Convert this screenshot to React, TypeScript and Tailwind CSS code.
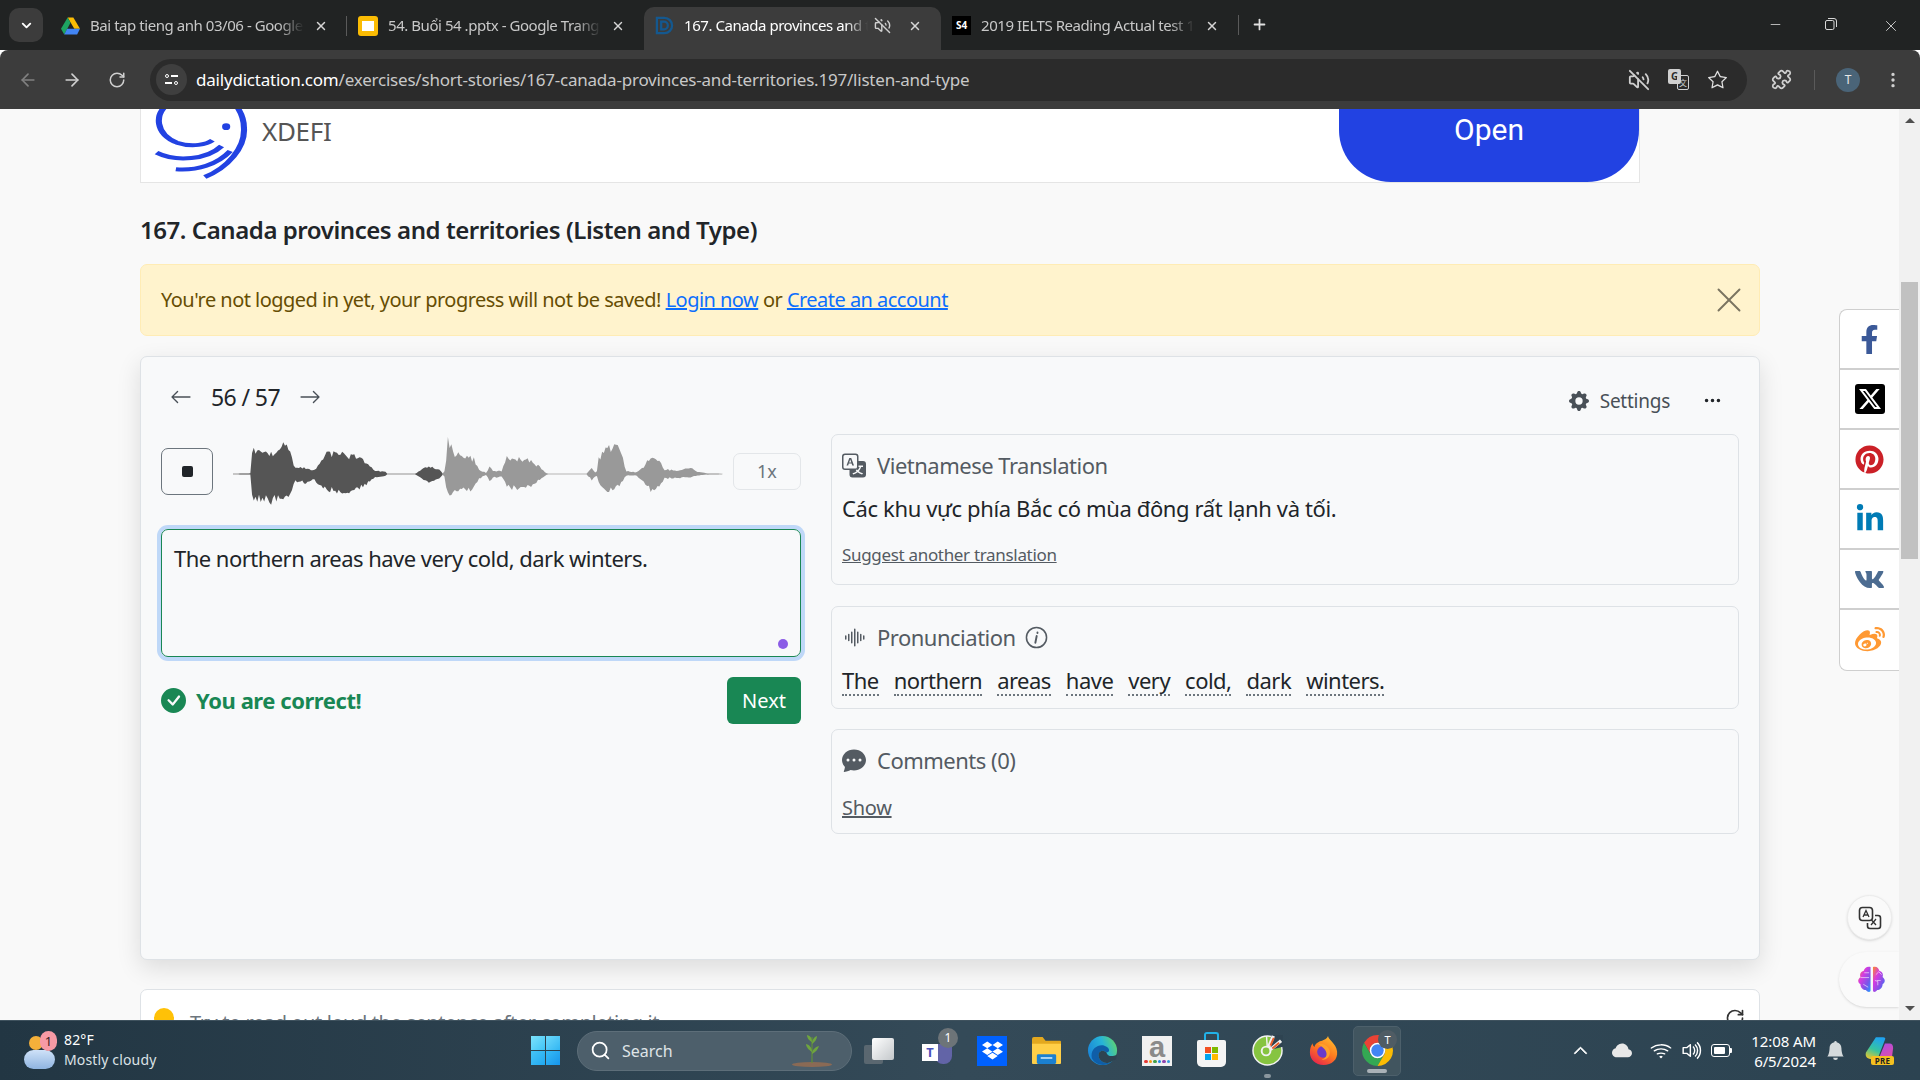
import React from "react";
import {
  BsArrowLeft,
  BsArrowRight,
  BsCheckCircleFill,
  BsChatDotsFill,
  BsGearFill,
  BsSoundwave,
  BsThreeDots,
  BsTranslate,
  BsTwitterX,
  BsBellFill,
  BsStar,
  BsThreeDotsVertical,
  BsChevronUp,
  BsWifi,
  BsVolumeUp,
  BsCloudFill,
} from "react-icons/bs";
import { FaFacebookF, FaLinkedinIn, FaPinterest, FaVk, FaWeibo, FaDropbox } from "react-icons/fa";
import {
  ArrowLeft,
  ArrowRight,
  ChevronDown,
  Minus,
  Plus,
  Puzzle,
  RotateCw,
  Search,
  VolumeOff,
  X,
} from "lucide-react";

// zoomed-in trace of the audio wave: x, amplitude up, amplitude down
const envelope: [number, number, number][] = [
  [214, 1, 1], [255, 2, 2], [258, 80, 70], [262, 85, 85], [275, 80, 82], [300, 65, 90], [320, 70, 75],
  [335, 105, 70], [345, 80, 75], [355, 25, 25], [365, 20, 25], [385, 20, 30], [400, 10, 15], [415, 40, 40],
  [432, 70, 50], [470, 65, 60], [500, 55, 50], [525, 35, 30], [540, 12, 12], [565, 8, 8], [570, 1, 1],
  [635, 1, 1], [650, 15, 15], [665, 25, 30], [690, 15, 15], [698, 2, 2], [703, 10, 10], [710, 110, 75],
  [725, 70, 60], [745, 55, 50], [770, 50, 50], [782, 15, 15], [800, 2, 2], [806, 25, 25], [815, 10, 12],
  [835, 10, 10], [845, 55, 40], [870, 50, 50], [900, 45, 40], [925, 20, 15], [935, 5, 5], [940, 1, 1],
  [1030, 1, 1], [1042, 18, 20], [1053, 1, 2], [1058, 50, 30], [1075, 80, 55], [1100, 95, 45], [1115, 45, 25],
  [1120, 10, 5], [1132, 8, 5], [1145, 5, 5], [1165, 30, 30], [1185, 65, 65], [1205, 25, 25], [1210, 15, 15],
  [1240, 12, 12], [1270, 20, 12], [1285, 8, 5], [1310, 2, 2], [1345, 1, 1],
];

const ampAt = (x: number, side: 1 | 2) => {
  for (let i = 0; i < envelope.length - 1; i++) {
    const a = envelope[i];
    const b = envelope[i + 1];
    if (x >= a[0] && x <= b[0]) {
      const t = (x - a[0]) / (b[0] - a[0] || 1);
      return a[side] + (b[side] - a[side]) * t;
    }
  }
  return 1;
};

// fixed noise so the wave looks the same on every render
const noise = (x: number) => {
  const v = Math.sin(x * 12.9898) * 43758.5453;
  return v - Math.floor(v);
};

const wavePath = (from: number, to: number) => {
  const top: string[] = [];
  const bottom: string[] = [];
  for (let x = from; x <= to; x += 4) {
    top.push(`${x},${333 - ampAt(x, 1) * (0.72 + 0.34 * noise(x))}`);
    bottom.unshift(`${x},${333 + ampAt(x, 2) * (0.72 + 0.34 * noise(x + 7))}`);
  }
  return `M${top.join(" L")} L${bottom.join(" L")} Z`;
};

const Waveform = () => (
  <svg viewBox="214 222 1131 210" preserveAspectRatio="none" className="w-[490px] h-[70px] shrink-0">
    <rect x="214" y="332" width="1131" height="2" fill="#d4d4d4" />
    <path d={wavePath(214, 698)} fill="#555555" />
    <path d={wavePath(698, 1345)} fill="#999999" />
  </svg>
);

const DriveIcon = () => (
  <svg viewBox="0 0 20 18" className="w-[19px] h-[18px] shrink-0">
    <path d="M7 0h6l7 12h-6z" fill="#fbbc04" />
    <path d="M7 0l3 5.5L3.4 18 0 12z" fill="#1ea362" />
    <path d="M6.5 12H20l-3 6H3.4z" fill="#4285f4" />
  </svg>
);

const SlidesIcon = () => (
  <div className="w-[20px] h-[20px] rounded-[3px] bg-[#fbbc04] flex items-center justify-center shrink-0">
    <div className="w-[12px] h-[10px] bg-white" />
  </div>
);

const DictationIcon = () => (
  <svg viewBox="0 0 20 20" className="w-[19px] h-[19px] shrink-0">
    <path d="M2 2h8a8 8 0 0 1 0 16H2z" fill="none" stroke="#14588f" strokeWidth="2.4" />
    <path d="M6.500 6h3a4 4 0 0 1 0 8h-3z" fill="none" stroke="#14588f" strokeWidth="2.4" />
  </svg>
);

const S4Icon = () => (
  <div className="w-[19px] h-[19px] bg-black text-white text-[10px] font-bold flex items-center justify-center shrink-0">
    S4
  </div>
);

const tabs = [
  { title: "Bai tap tieng anh 03/06 - Google Drive", icon: <DriveIcon /> },
  { title: "54. Buổi 54 .pptx - Google Trang tính", icon: <SlidesIcon /> },
  { title: "167. Canada provinces and territories", icon: <DictationIcon />, active: true, muted: true },
  { title: "2019 IELTS Reading Actual test 1", icon: <S4Icon /> },
];

const TabStrip = () => (
  <div className="h-[50px] bg-[#212323] flex shrink-0 text-[15px] text-[#c8c8c8]">
    <div className="w-[50px] flex items-start pt-[8px] pl-[9px]">
      <div className="w-[34px] h-[34px] rounded-[10px] bg-[#3c3c3c] flex items-center justify-center text-white">
        <ChevronDown size={15} strokeWidth={3} />
      </div>
    </div>
    {tabs.map((tab, i) => (
      <div
        key={tab.title}
        className={`w-[297px] mt-[7px] h-[43px] flex items-center pl-[11px] pr-[19px] pb-[6px] rounded-t-[10px] ${
          tab.active ? "bg-[#3c3c3c] text-white" : ""
        }`}
      >
        {tab.icon}
        <div className="flex-1 ml-[10px] overflow-hidden whitespace-nowrap tracking-[-0.45px] [mask-image:linear-gradient(to_right,black_88%,transparent)]">
          {tab.title}
        </div>
        {tab.muted && <VolumeOff size={17} className="ml-[6px] mr-[7px] text-[#d0d0d0]" />}
        <X size={14} strokeWidth={2.5} className="ml-[10px] text-[#d5d5d5]" />
        {i === 0 && <div className="w-px h-[20px] bg-[#5a5a5a] -mr-[19px] ml-[18px]" />}
      </div>
    ))}
    <div className="w-px h-[20px] bg-[#5a5a5a] mt-[15px]" />
    <div className="ml-[12px] mt-[16px] text-[#e0e0e0]">
      <Plus size={17} strokeWidth={2.5} />
    </div>
    <div className="flex-1" />
    <div className="flex items-start pt-[17px] text-[#d8d8d8]">
      <Minus size={15} strokeWidth={1.3} className="mr-[41px]" />
      <svg viewBox="0 0 14 14" className="w-[14px] h-[14px] mr-[44px]" fill="none" stroke="currentColor">
        <rect x="1.5" y="3.5" width="8.5" height="9" rx="1.5" />
        <path d="M4 1.5h6a2.5 2.5 0 0 1 2.5 2.5v6" />
      </svg>
      <X size={18} strokeWidth={1.2} className="mr-[20px]" />
    </div>
  </div>
);

const Toolbar = () => (
  <div className="h-[59px] bg-[#3c3c3c] flex items-center shrink-0 rounded-t-[8px]">
    <ArrowLeft size={20} className="ml-[18px] text-[#808080]" />
    <ArrowRight size={20} className="ml-[24px] text-[#d0d0d0]" />
    <RotateCw size={18} className="ml-[26px] text-[#d0d0d0]" />
    <div className="ml-[24px] w-[1597px] h-[42px] rounded-full bg-[#2b2b2b] flex items-center pl-[6px] pr-[20px]">
      <div className="w-[31px] h-[31px] rounded-full bg-[#3f3f3f] flex flex-col items-center justify-center gap-[3px] shrink-0">
        <div className="flex items-center gap-[2px]">
          <div className="w-[4px] h-[4px] rounded-full border border-white" />
          <div className="w-[7px] h-[1.5px] bg-white" />
        </div>
        <div className="flex items-center gap-[2px]">
          <div className="w-[7px] h-[1.5px] bg-white" />
          <div className="w-[4px] h-[4px] rounded-full border border-white" />
        </div>
      </div>
      <div className="ml-[9px] text-[17px] tracking-[-0.21px] text-[#c8c8c8] whitespace-nowrap flex-1">
        <span className="text-white">dailydictation.com</span>/exercises/short-stories/167-canada-provinces-and-territories.197/listen-and-type
      </div>
      <VolumeOff size={22} className="text-[#d0d0d0]" />
      <div className="ml-[18px] w-[21px] h-[21px] relative">
        <div className="absolute left-0 top-0 w-[13px] h-[15px] bg-[#d0d0d0] rounded-[2px] text-[#2b2b2b] text-[10px] leading-[15px] text-center font-bold">
          G
        </div>
        <div className="absolute right-0 bottom-0 w-[12px] h-[15px] border border-[#d0d0d0] rounded-[2px] text-[#d0d0d0] text-[8px] leading-[13px] text-center font-['Noto_Sans_CJK_SC',sans-serif]">
          文
        </div>
      </div>
      <BsStar size={19} className="ml-[19px] text-[#e0e0e0]" />
    </div>
    <Puzzle size={21} className="ml-[24px] text-[#d0d0d0]" />
    <div className="ml-[22px] w-px h-[20px] bg-[#5a5a5a]" />
    <div className="ml-[21px] w-[24px] h-[24px] rounded-full bg-[#4a6478] text-[#e8e8e8] text-[12px] flex items-center justify-center">
      T
    </div>
    <BsThreeDotsVertical size={18} className="ml-[24px] text-[#d0d0d0]" />
  </div>
);

const XdefiLogo = () => (
  <svg viewBox="45 -60 185 300" preserveAspectRatio="none" className="w-[94px] h-[100px] shrink-0" fill="none" stroke="#2242e2" strokeWidth="12">
    <path d="M80 0C40 40 50 100 90 125c30 15 60 5 70-7" />
    <path d="M50 155c40 30 100 20 128-20" />
    <path d="M88 205c42 5 82-15 107-55" />
    <path d="M145 228c45-28 80-88 77-148 0-30-7-50-17-70" />
    <ellipse cx="187" cy="77" rx="8" ry="10" fill="#2242e2" stroke="none" />
  </svg>
);

const words = ["The", "northern", "areas", "have", "very", "cold,", "dark", "winters."];

const Panel = ({ className, children }: { className: string; children: React.ReactNode }) => (
  <div className={`rounded-[7px] border border-[#dee2e6] px-[10px] ${className}`}>{children}</div>
);

const PanelHead = ({ icon, title, extra }: { icon: React.ReactNode; title: string; extra?: React.ReactNode }) => (
  <div className="flex items-center text-[22px] leading-[30px] text-[#545b62]">
    <span className="w-[24px] flex justify-center">{icon}</span>
    <span className="ml-[11px] tracking-[-0.5px]">{title}</span>
    {extra}
  </div>
);

const InfoIcon = () => (
  <svg viewBox="0 0 24 24" className="w-[23px] h-[23px] ml-[9px]" fill="none" stroke="#545b62" strokeWidth="1.6">
    <circle cx="12" cy="12" r="10.5" />
    <path d="M13 6.8v.6M12.2 10.5l-1.4 7" strokeLinecap="round" strokeWidth="2" />
  </svg>
);

const ExerciseCard = () => (
  <div className="mt-[20px] h-[604px] rounded-[7px] border border-[#dee2e6] bg-[#f8f9fa] shadow-[0_8px_24px_rgba(0,0,0,0.12)] px-[20px] grid grid-cols-[640px_908px] gap-x-[30px] text-[#212529]">
    <div>
      <div className="h-[91px] flex items-start pt-[25px] text-[23px] leading-[30px]">
        <BsArrowLeft size={22} className="ml-[9px] mt-[4px] text-[#495057]" />
        <span className="ml-[19px] tracking-[-0.6px]">56 / 57</span>
        <BsArrowRight size={22} className="ml-[19px] mt-[4px] text-[#495057]" />
      </div>
      <div className="flex items-center h-[47px]">
        <div className="w-[52px] h-[47px] rounded-[7px] border border-[#6c757d] flex items-center justify-center">
          <div className="w-[11px] h-[11px] rounded-[2px] bg-[#212529]" />
        </div>
        <div className="ml-[20px]">
          <Waveform />
        </div>
        <div className="ml-[10px] w-[68px] h-[37px] rounded-[7px] border border-[#e3e6e9] flex items-center justify-center text-[#6c757d] text-[18px]">
          1x
        </div>
      </div>
      <div className="mt-[34px] h-[128px] rounded-[7px] border border-[#198754] ring-4 ring-[#bfd8f8] px-[12px] pt-[13px] relative text-[22px] leading-[30px] tracking-[-0.53px]">
        The northern areas have very cold, dark winters.
        <div className="absolute right-[12px] bottom-[7px] w-[10px] h-[10px] rounded-full bg-[#8b5ce6]" />
      </div>
      <div className="mt-[20px] flex items-center justify-between">
        <div className="flex items-center text-[#198754] font-bold text-[22px] tracking-[-0.45px]">
          <BsCheckCircleFill size={25} />
          <span className="ml-[10px]">You are correct!</span>
        </div>
        <div className="w-[74px] h-[47px] rounded-[6px] bg-[#198754] text-white text-[20px] flex items-center justify-center">
          Next
        </div>
      </div>
    </div>
    <div>
      <div className="h-[77px] flex items-start justify-end pt-[29px] text-[#495057]">
        <BsGearFill size={20} className="mt-[5px]" />
        <span className="ml-[11px] text-[19px] leading-[30px] tracking-[-0.25px]">Settings</span>
        <BsThreeDots size={19} className="ml-[33px] mt-[5px] mr-[17px] text-[#212529]" />
      </div>
      <Panel className="h-[151px] pt-[15px]">
        <PanelHead icon={<BsTranslate size={25} />} title="Vietnamese Translation" />
        <div className="mt-[13px] text-[22px] leading-[30px] tracking-[-0.37px]">Các khu vực phía Bắc có mùa đông rất lạnh và tối.</div>
        <div className="mt-[19px] text-[17px] leading-[26px] tracking-[-0.32px] text-[#545b62] underline">Suggest another translation</div>
      </Panel>
      <Panel className="h-[103px] mt-[21px] pt-[15px]">
        <PanelHead icon={<BsSoundwave size={25} />} title="Pronunciation" extra={<InfoIcon />} />
        <div className="mt-[14px] flex gap-x-[15px] text-[22px] leading-[28px] tracking-[-0.52px]">
          {words.map((word) => (
            <span key={word} className="border-b-2 border-dotted border-[#6c757d]">
              {word}
            </span>
          ))}
        </div>
      </Panel>
      <Panel className="h-[105px] mt-[20px] pt-[15px]">
        <PanelHead icon={<BsChatDotsFill size={24} />} title="Comments (0)" />
        <div className="mt-[19px] text-[20px] leading-[28px] tracking-[-0.3px] text-[#545b62] underline">Show</div>
      </Panel>
    </div>
  </div>
);

const shares = [
  { key: "fb", icon: <FaFacebookF size={29} className="text-[#3b5998]" /> },
  {
    key: "x",
    icon: (
      <div className="w-[30px] h-[30px] rounded-[3px] bg-black flex items-center justify-center text-white">
        <BsTwitterX size={22} />
      </div>
    ),
  },
  { key: "pin", icon: <FaPinterest size={29} className="text-[#cb2027]" /> },
  { key: "in", icon: <FaLinkedinIn size={30} className="text-[#007bb5]" /> },
  { key: "vk", icon: <FaVk size={31} className="text-[#4c6c91]" /> },
  { key: "wb", icon: <FaWeibo size={30} className="text-[#ff9933]" /> },
];

const ShareBar = () => (
  <div className="absolute right-0 top-[200px] w-[60px] rounded-l-[8px] border border-r-0 border-[#cfcfcf] bg-white divide-y-2 divide-[#cfcfcf]">
    {shares.map((s) => (
      <div key={s.key} className="h-[60px] flex items-center justify-center">
        {s.icon}
      </div>
    ))}
  </div>
);

const FloatButtons = () => (
  <>
    <div className="absolute right-[7px] top-[786px] w-[45px] h-[45px] rounded-full bg-[#fafafa] border border-[#ececec] shadow-sm flex items-center justify-center">
      <svg viewBox="0 0 24 24" className="w-[24px] h-[24px]" fill="none" stroke="#333" strokeWidth="1.6">
        <rect x="1.5" y="1.5" width="13" height="13" rx="3" />
        <path d="M5 11l3-6.5 3 6.5M6 9h4" strokeWidth="1.3" />
        <path d="M17 9.5h3a2.5 2.5 0 0 1 2.5 2.5v8a2.5 2.5 0 0 1-2.5 2.5h-8A2.5 2.5 0 0 1 9.5 20v-3" />
        <path d="M13 19l5-6M13.5 14l4.5 5" strokeWidth="1.3" />
      </svg>
    </div>
    <div className="absolute right-0 top-[843px] w-[60px] h-[55px] rounded-l-full bg-[#fafafa] shadow-sm flex items-center pl-[18px]">
      <svg viewBox="0 0 30 28" className="w-[30px] h-[27px]">
        <defs>
          <linearGradient id="brain" x1="0" y1="0" x2="1" y2="1">
            <stop offset="0" stopColor="#ff8a2a" />
            <stop offset="0.35" stopColor="#d63be0" />
            <stop offset="0.7" stopColor="#7a55ea" />
            <stop offset="1" stopColor="#1f9cff" />
          </linearGradient>
        </defs>
        <path d="M13.5 1C10 0 7 2 6.500 5 3 6 2 9 3 11.500 0 14 0 17 3 19c0 4 3 6 5.500 6 2 2.500 5 3 5 0z" fill="url(#brain)" />
        <path d="M16 1c4-1 6 1 6.500 4 3.500 1 4.500 4 3.500 6.500 3 2.500 3 5.500 0 7.500 0 4-3 6-5.500 6-2 2.500-4.500 3-4.500 0z" fill="url(#brain)" />
        <path d="M3 12h9M7 7l5 0M6 19l5 3M19 9l3-3 3 3M21 20v-4l-3-1M24 15h-4" stroke="#fff" strokeOpacity="0.6" fill="none" />
      </svg>
    </div>
  </>
);

const Scrollbar = () => (
  <div className="w-[21px] bg-[#f1f1f1] flex flex-col items-center shrink-0">
    <div className="mt-[9px] border-x-[5px] border-b-[5px] border-x-transparent border-b-[#505050]" />
    <div className="mt-[159px] w-[17px] h-[277px] bg-[#c1c1c1]" />
    <div className="flex-1" />
    <div className="mb-[9px] border-x-[5px] border-t-[5px] border-x-transparent border-t-[#505050]" />
  </div>
);

const Page = () => (
  <div className="flex flex-1 min-h-0">
    <div className="relative flex-1 bg-[#f9f9f9] overflow-hidden">
      <div className="ml-[140px] w-[1620px]">
        <div className="-mt-[56px] w-[1500px] h-[130px] bg-white border border-[#e5e5e5] flex items-start pl-[13px]">
          <div className="mt-[27px]">
            <XdefiLogo />
          </div>
          <span className="ml-[14px] mt-[59px] text-[26px] leading-[36px] tracking-[-0.3px] text-[#555]">XDEFI</span>
          <div className="flex-1" />
          <div className="w-[300px] h-[128px] rounded-[52px] bg-[#2242e2] text-white text-[30px] font-['Roboto'] flex items-center justify-center pt-[22px]">
            Open
          </div>
        </div>
        <h1 className="mt-[30px] text-[24px] leading-[34px] font-semibold text-[#212529] tracking-[-0.44px]">
          167. Canada provinces and territories (Listen and Type)
        </h1>
        <div className="mt-[17px] h-[72px] rounded-[7px] bg-[#fff3cd] border border-[#ffecb5] text-[#664d03] flex items-center pl-[20px] pr-[9px] text-[20px] tracking-[-0.53px]">
          <span>
            You're not logged in yet, your progress will not be saved!{" "}
            <span className="text-[#0d6efd] underline">Login now</span> or{" "}
            <span className="text-[#0d6efd] underline">Create an account</span>
          </span>
          <div className="flex-1" />
          <X size={42} strokeWidth={1.1} className="text-[#7a7460]" />
        </div>
        <ExerciseCard />
        <div className="mt-[29px] h-[80px] rounded-[7px] border border-[#dee2e6] bg-white flex items-start pl-[13px] pr-[14px] pt-[18px] text-[20px] text-[#6c757d]">
          <div className="w-[20px] h-[20px] rounded-full bg-[#ffc107]" />
          <span className="ml-[16px] tracking-[-0.4px]">Try to read out loud the sentence after completing it</span>
          <div className="flex-1" />
          <RotateCw size={20} className="text-[#333]" />
        </div>
      </div>
      <ShareBar />
      <FloatButtons />
    </div>
    <Scrollbar />
  </div>
);

const WindowsLogo = () => (
  <div className="grid grid-cols-2 gap-[1.5px] w-[29px] h-[29px] shrink-0">
    <div className="bg-gradient-to-br from-[#7be2fb] to-[#3cc4f5]" />
    <div className="bg-gradient-to-br from-[#6bd9fa] to-[#2fb6f3]" />
    <div className="bg-gradient-to-br from-[#45c4f7] to-[#1fa8f0]" />
    <div className="bg-gradient-to-br from-[#36bbf6] to-[#1694ea]" />
  </div>
);

const Plant = () => (
  <svg viewBox="0 0 44 34" className="w-[44px] h-[34px]">
    <ellipse cx="22" cy="30.500" rx="20" ry="2.500" fill="#8a6a55" />
    <path d="M22 29V3" stroke="#5f8f3a" strokeWidth="1.200" />
    <path d="M22 8c-4-2-5-5-5-7 4 1 5 4 5 7zM22 10c3-2 5-5 5-8-3 1-5 4-5 8zM22 18c-3-2-6-5-6-8 4 1 6 4 6 8zM22 20c4-2 6-5 7-8-4 1-7 4-7 8z" fill="#6fa53e" />
  </svg>
);

const TaskView = () => (
  <div className="relative w-[30px] h-[26px] shrink-0">
    <div className="absolute left-0 bottom-0 w-[19px] h-[19px] rounded-[2px] bg-[#5a6770]" />
    <div className="absolute right-0 top-0 w-[22px] h-[22px] rounded-[2px] bg-gradient-to-br from-white to-[#c4c8cb]" />
  </div>
);

const Teams = () => (
  <div className="relative w-[32px] h-[32px]">
    <div className="absolute right-[2px] top-[9px] w-[17px] h-[20px] rounded-b-[8px] bg-[#6264a7]" />
    <div className="absolute right-[3px] top-[3px] w-[9px] h-[9px] rounded-full bg-[#7b83eb]" />
    <div className="absolute left-0 top-[9px] w-[16px] h-[17px] bg-white text-[#4b53bc] text-[13px] leading-[17px] font-bold text-center">T</div>
    <div className="absolute -right-[4px] -top-[7px] w-[20px] h-[20px] rounded-full bg-[#6d7478] text-white text-[12px] leading-[20px] text-center">1</div>
  </div>
);

const Folder = () => (
  <svg viewBox="0 0 32 30" className="w-[31px] h-[29px]">
    <path d="M1 3a2 2 0 0 1 2-2h9l3 4h15a1 1 0 0 1 1 1v4H1z" fill="#e3a81f" />
    <path d="M1 8h30v20a1 1 0 0 1-1 1H2a1 1 0 0 1-1-1z" fill="#ffcf48" />
    <rect x="6" y="19" width="20" height="10" rx="1.500" fill="#1b80d0" />
    <rect x="10" y="22" width="12" height="1.500" fill="#d8f0ff" />
  </svg>
);

const Edge = () => (
  <svg viewBox="0 0 32 32" className="w-[31px] h-[31px]">
    <defs>
      <linearGradient id="edge" x1="0" y1="0.6" x2="1" y2="0.2">
        <stop offset="0" stopColor="#1a86d8" />
        <stop offset="0.55" stopColor="#27b4d8" />
        <stop offset="1" stopColor="#62d66a" />
      </linearGradient>
    </defs>
    <circle cx="16" cy="16" r="15" fill="url(#edge)" />
    <path d="M5 24C3 15 11 9 18 11c6 2 6 7 2 7-4-4-9-1-8 4 1 6 8 9 14 5-6 6-17 5-21-3z" fill="#0f5ea8" />
    <path d="M12 22c-1-5 4-8 8-4 1 4 6 5 11 2l-1 5-4 2c-6 4-13 1-14-5z" fill="#2e4351" />
  </svg>
);

const AmazonTile = () => (
  <div className="w-[30px] h-[30px] bg-[#f0f0f0] flex flex-col items-center">
    <span className="text-[29px] leading-[23px] h-[23px] text-[#8a8a8a] font-bold font-['Liberation_Sans']">a</span>
    <div className="flex gap-[1px] mt-[1px]">
      {["bg-[#e53935]", "bg-[#f39c12]", "bg-[#43a047]", "bg-[#1e88e5]", "bg-[#8e44ad]", "bg-[#3498db]"].map((c) => (
        <div key={c} className={`w-[3.5px] h-[3.5px] rounded-full ${c}`} />
      ))}
    </div>
  </div>
);

const Store = () => (
  <div className="relative w-[29px] h-[30px] mt-[2px]">
    <div className="absolute left-[7px] -top-[5px] w-[15px] h-[9px] rounded-t-[3px] border-2 border-b-0 border-[#22b2e8]" />
    <div className="absolute inset-x-0 top-[3px] bottom-0 rounded-b-[5px] rounded-t-[2px] bg-[#f4f4f4] grid grid-cols-2 gap-[1px] px-[8px] py-[7px]">
      <div className="bg-[#f25022]" />
      <div className="bg-[#7fba00]" />
      <div className="bg-[#00a4ef]" />
      <div className="bg-[#ffb900]" />
    </div>
  </div>
);

const CocCoc = () => (
  <svg viewBox="0 0 32 32" className="w-[31px] h-[31px]">
    <circle cx="16" cy="16" r="15" fill="#86c440" stroke="#f2f2f2" strokeWidth="1.500" />
    <path d="M16 16L20 0h12v12z" fill="#2e4351" />
    <path d="M16 16L15 1" stroke="#f2f2f2" strokeWidth="1.500" />
    <path d="M17 13l5-12M19 15L30 6" stroke="#f2f2f2" strokeWidth="3.500" />
    <path d="M19 11l3.500-8M21 14l7-6" stroke="#e85d2a" strokeWidth="2" />
    <circle cx="14.500" cy="16.500" r="4.500" fill="#86c440" stroke="#f2f2f2" strokeWidth="2" />
  </svg>
);

const Firefox = () => (
  <svg viewBox="0 0 32 34" className="w-[29px] h-[31px]">
    <defs>
      <linearGradient id="ff" x1="0.8" y1="0" x2="0.2" y2="1">
        <stop offset="0" stopColor="#ffbf2e" />
        <stop offset="0.5" stopColor="#ff7a1f" />
        <stop offset="1" stopColor="#e5204f" />
      </linearGradient>
    </defs>
    <path d="M21 1c0 4 9 8 10 17 1 9-6 15-15 15S1 27 1 19c0-4 1-7 3-10 0 2 1 3 2 4 1-4 5-6 9-7 2-1 5-2 6-5z" fill="url(#ff)" />
    <circle cx="15.500" cy="18.500" r="6.500" fill="#6b3ac9" />
    <path d="M10 10c6-2 13 3 13 9s-5 9-9 8c5-1 6-5 5-8-1-4-5-7-9-9z" fill="#ffa02a" />
  </svg>
);

const Chrome = () => (
  <svg viewBox="4 4 40 40" className="w-[31px] h-[31px]">
    <path d="M24 4A20 20 0 0 1 41.32 14H24A10 10 0 0 0 15.34 29L6.680 14A20 20 0 0 1 24 4z" fill="#ea4335" />
    <path d="M6.680 14A20 20 0 0 0 24 44L32.660 29A10 10 0 0 1 15.340 29z" fill="#34a853" />
    <path d="M41.320 14A20 20 0 0 1 24 44L32.660 29A10 10 0 0 0 24 14z" fill="#fbbc04" />
    <circle cx="24" cy="24" r="10" fill="#fff" />
    <circle cx="24" cy="24" r="8" fill="#4285f4" />
  </svg>
);

const Copilot = () => (
  <div className="relative w-[29px] h-[29px]">
    <svg viewBox="0 0 32 26" className="w-[29px] h-[24px]">
      <defs>
        <linearGradient id="copa" x1="0.6" y1="0" x2="0.2" y2="1">
          <stop offset="0" stopColor="#1fa3f0" />
          <stop offset="0.55" stopColor="#36c4a0" />
          <stop offset="1" stopColor="#e6c72e" />
        </linearGradient>
        <linearGradient id="copb" x1="0.3" y1="0" x2="0.8" y2="1">
          <stop offset="0" stopColor="#b14be0" />
          <stop offset="1" stopColor="#e04fa8" />
        </linearGradient>
      </defs>
      <path d="M12 1h8c2 0 3 1 2 3l-7 18c-1 2-2 3-4 3H6c-4 0-6-3-5-7z" fill="url(#copa)" />
      <path d="M22 8h5c3 0 4 2 4 5l-1 8c-1 3-3 4-6 4h-9z" fill="url(#copb)" />
    </svg>
    <div className="absolute left-[6px] bottom-0 w-[23px] h-[9px] rounded-[2px] bg-[#f5c020] text-[#222] text-[8px] leading-[9px] font-bold text-center tracking-[0.3px]">PRE</div>
  </div>
);

const Weather = () => (
  <div className="relative w-[32px] h-[36px]">
    <div className="absolute left-[5px] top-[3px] w-[14px] h-[14px] rounded-full bg-[#f4b03a]" />
    <div className="absolute left-0 bottom-0 w-[31px] h-[19px] rounded-full bg-gradient-to-b from-[#cfe2f8] to-[#8fb4e0]" />
    <div className="absolute left-[16px] -top-[2px] w-[17px] h-[20px] rounded-full bg-[#f79aa5] text-[#3a1e22] text-[13px] leading-[20px] text-center">1</div>
  </div>
);

const TaskIcon = ({ children, dot, className }: { children: React.ReactNode; dot?: string; className: string }) => (
  <div className={`relative h-[60px] flex items-center justify-center shrink-0 ${className}`}>
    {children}
    {dot && <div className={`absolute bottom-[3px] rounded-full bg-[#8a969e] h-[4px] ${dot}`} />}
  </div>
);

const Taskbar = () => (
  <div className="h-[60px] bg-gradient-to-r from-[#223643] via-[#344a58] to-[#2c4351] border-t border-[#3f525e] flex items-center text-white shrink-0">
    <div className="ml-[24px]">
      <Weather />
    </div>
    <div className="ml-[8px] pb-[2px] text-[14px] leading-[20px] w-[113px] tracking-[0.15px]">
      <div>82°F</div>
      <div className="text-[#dbe1e5]">Mostly cloudy</div>
    </div>
    <div className="ml-[354px]">
      <WindowsLogo />
    </div>
    <div className="ml-[17px] w-[275px] h-[40px] rounded-full bg-[#4d5f6b] border border-[#5d6e79] flex items-center pl-[12px] pr-[17px]">
      <Search size={21} strokeWidth={2} className="text-white" />
      <span className="ml-[11px] text-[16px] text-[#dfe4e7]">Search</span>
      <div className="flex-1" />
      <Plant />
    </div>
    <div className="ml-[12px]">
      <TaskView />
    </div>
    <TaskIcon className="w-[32px] ml-[28px]"><Teams /></TaskIcon>
    <TaskIcon className="w-[30px] ml-[23px]">
      <div className="w-[30px] h-[30px] bg-[#0061fe] flex items-center justify-center text-white">
        <FaDropbox size={21} />
      </div>
    </TaskIcon>
    <TaskIcon className="w-[31px] ml-[24px]"><Folder /></TaskIcon>
    <TaskIcon className="w-[32px] ml-[24px]"><Edge /></TaskIcon>
    <TaskIcon className="w-[30px] ml-[24px]"><AmazonTile /></TaskIcon>
    <TaskIcon className="w-[29px] ml-[25px]"><Store /></TaskIcon>
    <TaskIcon className="w-[31px] ml-[26px]" dot="w-[7px]"><CocCoc /></TaskIcon>
    <TaskIcon className="w-[30px] ml-[25px]"><Firefox /></TaskIcon>
    <div className="ml-[15px] w-[48px] h-[50px] rounded-[5px] bg-[#41555f] border border-[#4d606b] relative flex items-center justify-center shrink-0">
      <Chrome />
      <div className="absolute right-[3px] top-[3px] w-[19px] h-[19px] rounded-full bg-[#4f5c64] text-[11px] leading-[19px] text-center">T</div>
      <div className="absolute bottom-[2px] w-[20px] h-[4px] rounded-full bg-[#aab2b8]" />
    </div>
    <div className="flex-1" />
    <BsChevronUp size={15} strokeWidth={1} />
    <BsCloudFill size={20} className="ml-[24px] text-[#e8e8e8]" />
    <BsWifi size={22} className="ml-[18px]" />
    <BsVolumeUp size={23} className="ml-[9px]" />
    <div className="ml-[7px] w-[19px] h-[13px] rounded-[3px] border border-white flex p-[2px]">
      <div className="w-[11px] bg-white rounded-[1px]" />
    </div>
    <div className="w-[2px] h-[5px] bg-white rounded-r-[1px]" />
    <div className="ml-[6px] w-[78px] text-[15px] leading-[20px] text-right tracking-[-0.1px]">
      <div>12:08 AM</div>
      <div>6/5/2024</div>
    </div>
    <BsBellFill size={19} className="ml-[10px] text-[#d5dadc]" />
    <div className="ml-[20px] mr-[26px]">
      <Copilot />
    </div>
  </div>
);

export default function App() {
  return (
    <div className="w-[1920px] h-[1080px] flex flex-col overflow-hidden font-['Noto_Sans',sans-serif]">
      <TabStrip />
      <Toolbar />
      <Page />
      <Taskbar />
    </div>
  );
}
